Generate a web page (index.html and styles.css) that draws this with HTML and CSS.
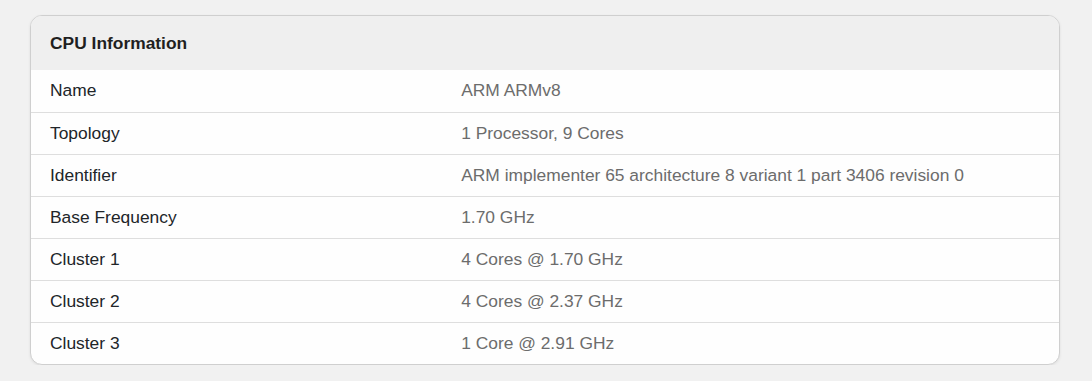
FILE: index.html
```html
<!DOCTYPE html>
<html>
<head>
<meta charset="utf-8">
<link rel="stylesheet" href="styles.css">
</head>
<body>
<div class="card">
  <div class="card-header">CPU Information</div>
  <table class="info">
    <tr><td class="label">Name</td><td class="value">ARM ARMv8</td></tr>
    <tr><td class="label">Topology</td><td class="value">1 Processor, 9 Cores</td></tr>
    <tr><td class="label">Identifier</td><td class="value">ARM implementer 65 architecture 8 variant 1 part 3406 revision 0</td></tr>
    <tr><td class="label">Base Frequency</td><td class="value">1.70 GHz</td></tr>
    <tr><td class="label">Cluster 1</td><td class="value">4 Cores @ 1.70 GHz</td></tr>
    <tr><td class="label">Cluster 2</td><td class="value">4 Cores @ 2.37 GHz</td></tr>
    <tr><td class="label">Cluster 3</td><td class="value">1 Core @ 2.91 GHz</td></tr>
  </table>
</div>
</body>
</html>
```
FILE: styles.css
```css
html, body {
  margin: 0;
  background: #f1f1f1;
}
body {
  padding: 15px 32px 0 30px;
  font-family: "Liberation Sans", Arial, sans-serif;
  font-size: 17.4px;
}
.card {
  background: #fefefe;
  border: 1px solid #cfcfcf;
  border-radius: 12px;
  overflow: hidden;
  box-shadow: 0 1px 3px rgba(0,0,0,0.08);
}
.card-header {
  background: #efefef;
  height: 54px;
  box-sizing: border-box;
  padding: 0 19px;
  display: flex;
  align-items: center;
  font-weight: bold;
  color: #1f1f1f;
}
.info {
  width: 100%;
  border-collapse: collapse;
}
.info tr + tr td {
  border-top: 1px solid #dedede;
}
.info td {
  height: 42px;
  box-sizing: border-box;
  padding: 0 19px;
  vertical-align: middle;
}
.label {
  width: 40%;
  color: #212529;
}
.value {
  color: #6c6c6c;
}
```
